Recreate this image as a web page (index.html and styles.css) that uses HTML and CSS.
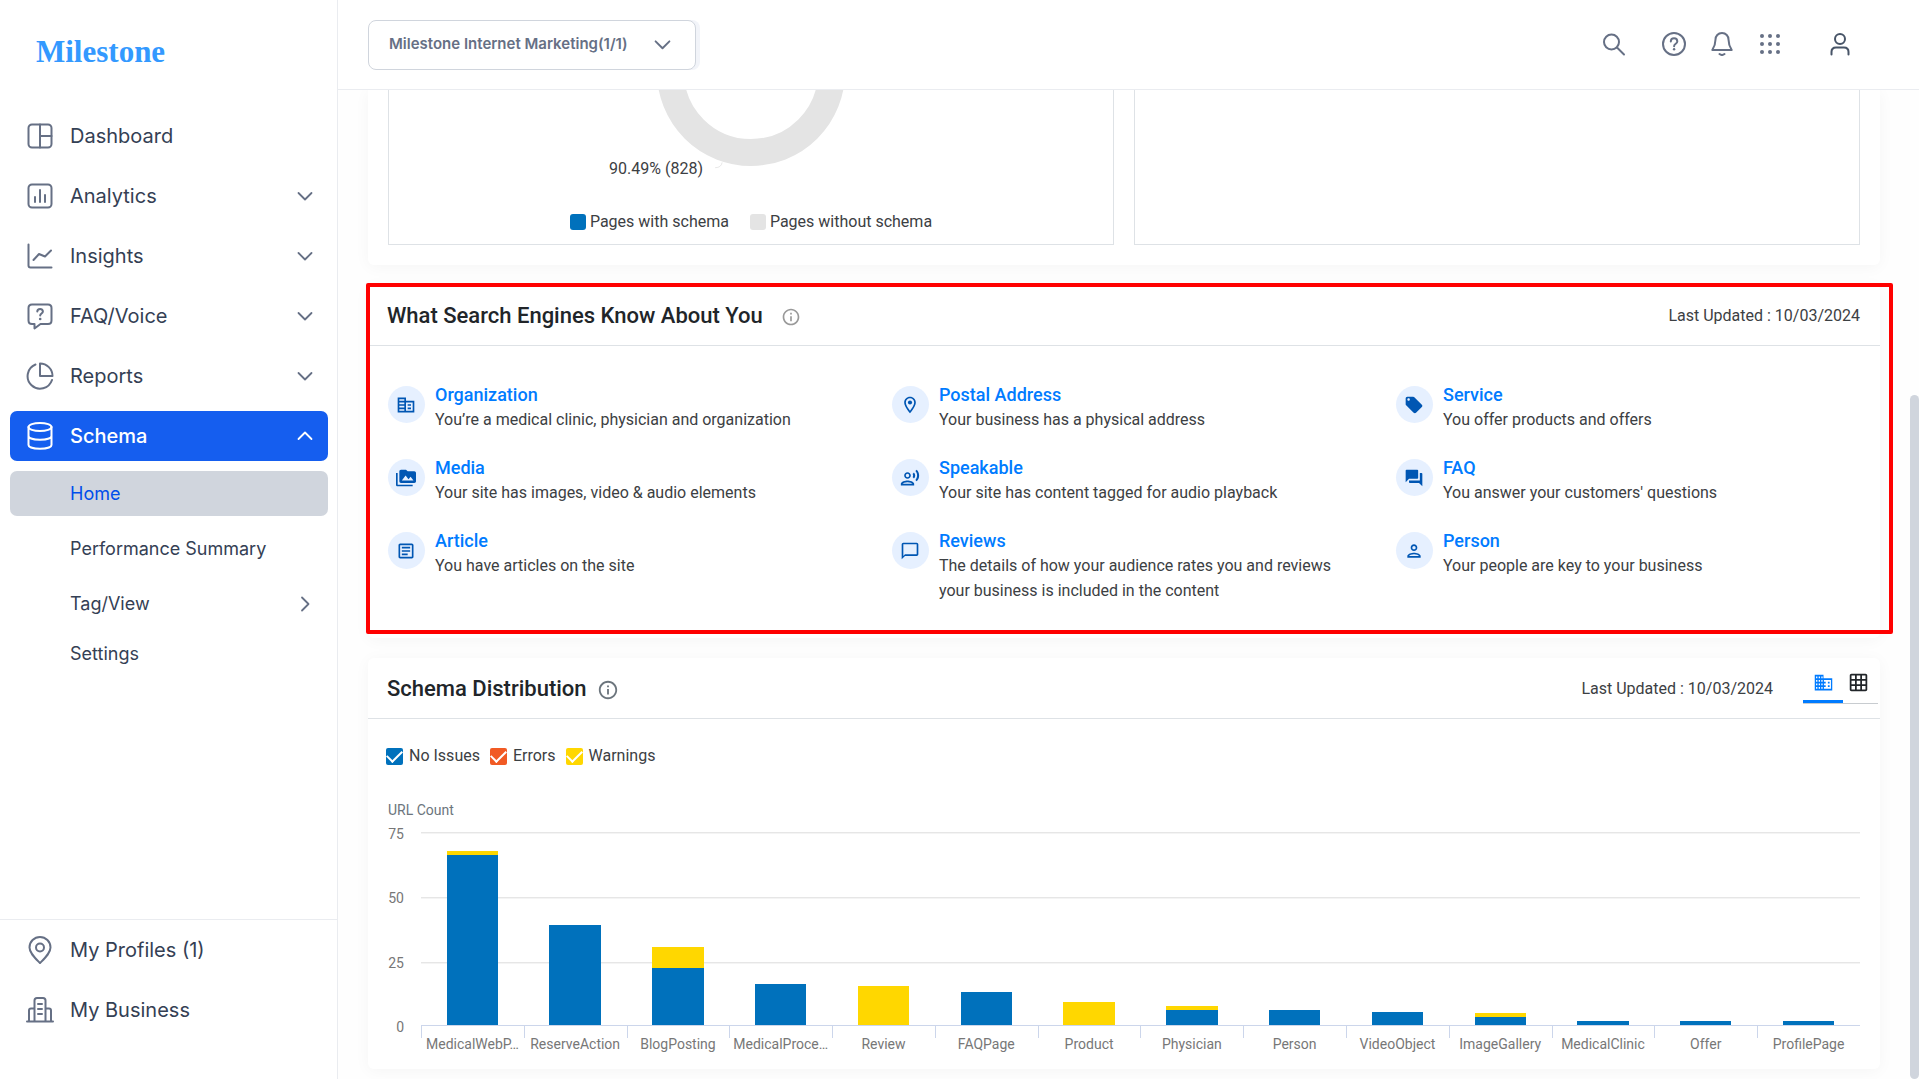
FILE: index.html
```html
<!DOCTYPE html>
<html lang="en">

<head>
  <meta charset="UTF-8">
  <meta name="viewport" content="width=device-width, initial-scale=1.0">
  <title>Milestone - Schema</title>
  <link rel="stylesheet" href="styles.css">
</head>

<body>

  <!-- shared icons -->
  <svg class="sprite" aria-hidden="true">
    <symbol id="chevron" viewBox="0 0 16 16">
      <path d="M1.5 5 8 11.5 14.5 5" fill="none" stroke="currentColor" stroke-width="1.8" stroke-linecap="round" stroke-linejoin="round" />
    </symbol>
    <symbol id="info" viewBox="0 0 24 24">
      <path d="M11 7h2v2h-2zm0 4h2v6h-2zm1-9C6.48 2 2 6.48 2 12s4.48 10 10 10 10-4.48 10-10S17.52 2 12 2zm0 18c-4.41 0-8-3.59-8-8s3.59-8 8-8 8 3.590 8 8-3.590 8-8 8z" />
    </symbol>
  </svg>

  <div class="app">
    <aside class="sidebar">
      <a class="logo" href="#">Milestone</a>

      <nav class="menu">
        <a class="menu-item" href="#">
          <svg class="menu-icon" viewBox="0 0 28 28"><rect x="2.500" y="2.500" width="23" height="23" rx="3.500" /><path d="M14 2.500v23M14 14h11.500" /></svg>
          <span>Dashboard</span>
        </a>
        <a class="menu-item" href="#">
          <svg class="menu-icon" viewBox="0 0 28 28"><rect x="2.500" y="2.500" width="23" height="23" rx="3.500" /><path d="M9 15v5M14 8v12M19 13v7" /></svg>
          <span>Analytics</span>
          <svg class="arrow"><use href="#chevron" /></svg>
        </a>
        <a class="menu-item" href="#">
          <svg class="menu-icon" viewBox="0 0 28 28"><path d="M2.500 2.500v21q0 2 2 2h21M7.500 18l5.500-6 6 2.500 6-6" /></svg>
          <span>Insights</span>
          <svg class="arrow"><use href="#chevron" /></svg>
        </a>
        <a class="menu-item" href="#">
          <svg class="menu-icon" viewBox="0 0 28 28"><path d="M6 2.500h16q3.500 0 3.500 3.500v12.500q0 3.500-3.500 3.500h-7.500L8.500 26.500v-4.500H6q-3.500 0-3.500-3.500V6q0-3.500 3.500-3.500z" /><path d="M11.300 9.500c0-3.500 5.600-3.500 5.600 0 0 2-2.700 2.100-2.700 4" /><circle class="fill" cx="14.200" cy="17" r="1.300" /></svg>
          <span>FAQ/Voice</span>
          <svg class="arrow"><use href="#chevron" /></svg>
        </a>
        <a class="menu-item" href="#">
          <svg class="menu-icon" viewBox="0 0 28 28"><path d="M14 1.500v12.500h12.500A12.500 12.500 0 0 0 14 1.500z" /><path d="M9.500 2.500A12.500 12.500 0 1 0 26 18" /></svg>
          <span>Reports</span>
          <svg class="arrow"><use href="#chevron" /></svg>
        </a>
        <a class="menu-item active" href="#">
          <svg class="menu-icon" viewBox="0 0 28 28"><ellipse cx="14" cy="5" rx="11.500" ry="4" /><path d="M2.500 5v18c0 5 23 5 23 0V5M2.500 14c0 5 23 5 23 0" /></svg>
          <span>Schema</span>
          <svg class="arrow up"><use href="#chevron" /></svg>
        </a>
        <div class="submenu">
          <a class="sub-item current" href="#">Home</a>
          <a class="sub-item" href="#">Performance Summary</a>
          <a class="sub-item parent" href="#">Tag/View <svg class="arrow right"><use href="#chevron" /></svg></a>
          <a class="sub-item" href="#">Settings</a>
        </div>
      </nav>

      <nav class="menu menu-bottom">
        <a class="menu-item" href="#">
          <svg class="menu-icon" viewBox="0 0 28 28"><path d="M14 27C9 22 3.500 17 3.500 11.500a10.500 10.500 0 0 1 21 0C24.500 17 19 22 14 27z" /><circle cx="14" cy="11.500" r="4" /></svg>
          <span>My Profiles (1)</span>
        </a>
        <a class="menu-item" href="#">
          <svg class="menu-icon" viewBox="0 0 28 28"><path d="M1 25.500h26M8.500 25V4.500q0-2.500 2.500-2.500h6q2.500 0 2.500 2.500V25M3 25V14.500q0-2 2-2h3.500M25 25V14.500q0-2-2-2h-3.500M12 8h4M12 13h4M12 18h4" /></svg>
          <span>My Business</span>
        </a>
      </nav>
    </aside>

    <div class="page">
      <header class="topbar">
        <div class="account">
          <select aria-label="Account">
            <option>Milestone Internet Marketing(1/1)</option>
          </select>
          <svg class="account-arrow"><use href="#chevron" /></svg>
        </div>
        <div class="tools">
          <button class="tool search" type="button" aria-label="Search"><svg viewBox="0 0 24 24"><circle cx="9.500" cy="10" r="7.500" /><path d="M15 15.500l7 7" /></svg></button>
          <button class="tool" type="button" aria-label="Help"><svg viewBox="0 0 24 24"><circle cx="12" cy="12" r="11" /><path d="M8.800 9.500c0-4.300 6.500-4.300 6.500 0 0 2.300-3.200 2.300-3.200 4.700" /><circle class="fill" cx="12.100" cy="17.300" r="1.200" /></svg></button>
          <button class="tool" type="button" aria-label="Notifications"><svg viewBox="0 0 24 24"><path d="M12 1c-4 0-6.500 3-6.500 6.500 0 5-1 7-3.200 10.500h19.400c-2.200-3.500-3.200-5.500-3.200-10.500C18.500 4 16 1 12 1z" /><path d="M9.500 22q2.500 2 5 0" /></svg></button>
          <button class="tool dots" type="button" aria-label="Apps"><svg viewBox="0 0 24 24"><circle cx="4" cy="4" r="2" /><circle cx="12" cy="4" r="2" /><circle cx="20" cy="4" r="2" /><circle cx="4" cy="12" r="2" /><circle cx="12" cy="12" r="2" /><circle cx="20" cy="12" r="2" /><circle cx="4" cy="20" r="2" /><circle cx="12" cy="20" r="2" /><circle cx="20" cy="20" r="2" /></svg></button>
          <button class="tool user" type="button" aria-label="Profile"><svg viewBox="0 0 24 24"><circle cx="12" cy="7" r="5" /><path d="M3.500 22.500V20q0-4.500 4.500-4.500h8q4.500 0 4.500 4.500v2.500" /></svg></button>
        </div>
      </header>

      <div class="scroll-area">
        <main class="content">

          <section class="card card-pages">
            <div class="panel">
              <div class="donut">
                <svg class="donut-ring" viewBox="-94 18 188 77"><circle cx="0" cy="0" r="80.500" /></svg>
                <div class="donut-label">90.49% (828)
                  <svg viewBox="0 0 10 8"><path d="M0 6.500q7 0 8-6" /></svg>
                </div>
              </div>
              <ul class="legend">
                <li><i class="swatch blue"></i>Pages with schema</li>
                <li><i class="swatch grey"></i>Pages without schema</li>
              </ul>
            </div>
            <div class="panel"></div>
          </section>

          <section class="card card-know">
            <div class="card-head">
              <h2>What Search Engines Know About You</h2>
              <svg class="info-icon light"><use href="#info" /></svg>
              <span class="updated">Last Updated : 10/03/2024</span>
            </div>
            <div class="know-grid">
              <div class="know">
                <span class="round"><svg viewBox="0 0 24 24"><path d="M12 7V3H2v18h20V7H12zm-2 12H4v-2h6v2zm0-4H4v-2h6v2zm0-4H4V9h6v2zm0-4H4V5h6v2zm10 12h-8V9h8v10zm-2-8h-4v2h4v-2zm0 4h-4v2h4v-2z" /></svg></span>
                <div><a href="#">Organization</a><p>You’re a medical clinic, physician and organization</p></div>
              </div>
              <div class="know">
                <span class="round"><svg viewBox="0 0 24 24"><path d="M12 2C8.130 2 5 5.130 5 9c0 5.250 7 13 7 13s7-7.750 7-13c0-3.870-3.130-7-7-7zM7 9c0-2.760 2.240-5 5-5s5 2.240 5 5c0 2.880-2.880 7.190-5 9.880C9.920 16.210 7 11.850 7 9z" /><circle cx="12" cy="9" r="2.500" /></svg></span>
                <div><a href="#">Postal Address</a><p>Your business has a physical address</p></div>
              </div>
              <div class="know">
                <span class="round"><svg viewBox="0 0 24 24"><path d="M21.410 11.580l-9-9C12.050 2.220 11.550 2 11 2H4c-1.100 0-2 .9-2 2v7c0 .55.220 1.050.59 1.420l9 9c.36.36.860.58 1.410.58.55 0 1.050-.22 1.410-.59l7-7c.37-.36.59-.86.59-1.410 0-.55-.23-1.060-.59-1.420zM5.500 7C4.670 7 4 6.330 4 5.500S4.670 4 5.500 4 7 4.670 7 5.500 6.330 7 5.500 7z" /></svg></span>
                <div><a href="#">Service</a><p>You offer products and offers</p></div>
              </div>
              <div class="know">
                <span class="round"><svg viewBox="0 0 24 24"><path d="M2 6H0v14c0 1.100.9 2 2 2h18v-2H2V6zm20-2h-8l-2-2H6c-1.100 0-2 .9-2 2v12c0 1.100.9 2 2 2h16c1.100 0 2-.9 2-2V6c0-1.100-.9-2-2-2zM7 15l4.500-6 3.500 4.510 2.500-3.010L21 15H7z" /></svg></span>
                <div><a href="#">Media</a><p>Your site has images, video &amp; audio elements</p></div>
              </div>
              <div class="know">
                <span class="round"><svg viewBox="0 0 24 24"><path d="M9 13c2.210 0 4-1.790 4-4s-1.790-4-4-4-4 1.790-4 4 1.790 4 4 4zm0-6c1.100 0 2 .9 2 2s-.9 2-2 2-2-.9-2-2 .9-2 2-2zm0 8c-2.670 0-8 1.340-8 4v2h16v-2c0-2.660-5.330-4-8-4zm-6 4c.22-.72 3.310-2 6-2 2.700 0 5.800 1.290 6 2H3zM15.080 7.050c.84 1.180.84 2.710 0 3.890l1.680 1.690c2.020-2.020 2.020-5.070 0-7.270l-1.680 1.690zM20.070 2l-1.630 1.630c2.770 3.020 2.770 7.560 0 10.740L20.070 16c3.900-3.890 3.910-9.950 0-14z" /></svg></span>
                <div><a href="#">Speakable</a><p>Your site has content tagged for audio playback</p></div>
              </div>
              <div class="know">
                <span class="round"><svg viewBox="0 0 24 24"><path d="M21 6h-2v9H6v2c0 .55.45 1 1 1h11l4 4V7c0-.55-.45-1-1-1zm-4 6V3c0-.55-.45-1-1-1H3c-.55 0-1 .45-1 1v14l4-4h10c.55 0 1-.45 1-1z" /></svg></span>
                <div><a href="#">FAQ</a><p>You answer your customers' questions</p></div>
              </div>
              <div class="know">
                <span class="round"><svg viewBox="0 0 24 24"><path d="M19 5v14H5V5h14m0-2H5c-1.100 0-2 .9-2 2v14c0 1.100.9 2 2 2h14c1.100 0 2-.9 2-2V5c0-1.100-.9-2-2-2zm-5 14H7v-2h7v2zm3-4H7v-2h10v2zm0-4H7V7h10v2z" /></svg></span>
                <div><a href="#">Article</a><p>You have articles on the site</p></div>
              </div>
              <div class="know">
                <span class="round"><svg viewBox="0 0 24 24"><path d="M20 2H4c-1.100 0-2 .9-2 2v18l4-4h14c1.100 0 2-.9 2-2V4c0-1.100-.9-2-2-2zm0 14H6l-2 2V4h16v12z" /></svg></span>
                <div><a href="#">Reviews</a><p>The details of how your audience rates you and reviews your business is included in the content</p></div>
              </div>
              <div class="know">
                <span class="round"><svg viewBox="0 0 24 24"><path d="M12 6c1.100 0 2 .9 2 2s-.9 2-2 2-2-.9-2-2 .9-2 2-2m0 10c2.700 0 5.800 1.290 6 2H6c.23-.72 3.310-2 6-2m0-12C9.790 4 8 5.790 8 8s1.790 4 4 4 4-1.790 4-4-1.790-4-4-4zm0 10c-2.670 0-8 1.340-8 4v2h16v-2c0-2.660-5.330-4-8-4z" /></svg></span>
                <div><a href="#">Person</a><p>Your people are key to your business</p></div>
              </div>
            </div>
            <div class="highlight"></div>
          </section>

          <section class="card card-chart">
            <div class="card-head">
              <h2>Schema Distribution</h2>
              <svg class="info-icon"><use href="#info" /></svg>
              <span class="updated">Last Updated : 10/03/2024</span>
              <div class="views">
                <button class="view on" type="button" aria-label="Chart view"><svg viewBox="0 0 24 24"><path d="M12 7V3H2v18h20V7H12zM5 19H3.500v-2H5v2zm0-4H3.500v-2H5v2zm0-4H3.500V9H5v2zm0-4H3.500V5H5v2zm3 12H6.500v-2H8v2zm0-4H6.500v-2H8v2zm0-4H6.500V9H8v2zm0-4H6.500V5H8v2zm3 12H9.500v-2H11v2zm0-4H9.500v-2H11v2zm0-4H9.500V9H11v2zm0-4H9.500V5H11v2zm9.500 12H12.500v-2h2v-2h-2v-2h2v-2h-2V9h8v10zm-1.500-8h-2v2h2v-2zm0 4h-2v2h2v-2z" /></svg></button>
                <button class="view" type="button" aria-label="Table view"><svg viewBox="0 0 24 24"><path d="M20 2H4c-1.100 0-2 .9-2 2v16c0 1.100.9 2 2 2h16c1.100 0 2-.9 2-2V4c0-1.100-.9-2-2-2zM8 20H4v-4h4v4zm0-6H4v-4h4v4zm0-6H4V4h4v4zm6 12h-4v-4h4v4zm0-6h-4v-4h4v4zm0-6h-4V4h4v4zm6 12h-4v-4h4v4zm0-6h-4v-4h4v4zm0-6h-4V4h4v4z" /></svg></button>
              </div>
            </div>

            <div class="filters">
              <label><input class="check blue" type="checkbox" checked>No Issues</label>
              <label><input class="check orange" type="checkbox" checked>Errors</label>
              <label><input class="check yellow" type="checkbox" checked>Warnings</label>
            </div>

            <div class="axis-title">URL Count</div>
            <div class="chart">
              <div class="y-axis"><span>75</span><span>50</span><span>25</span><span>0</span></div>
              <div class="plot">
                <div class="col"><div class="track"><i class="warn"></i><i class="ok" style="height: 88%"></i></div><span>MedicalWebP…</span></div>
                <div class="col"><div class="track"><i class="ok" style="height: 52%"></i></div><span>ReserveAction</span></div>
                <div class="col"><div class="track"><i class="warn" style="height: 11%"></i><i class="ok" style="height: 29.330%"></i></div><span>BlogPosting</span></div>
                <div class="col"><div class="track"><i class="ok" style="height: 21.330%"></i></div><span>MedicalProce…</span></div>
                <div class="col"><div class="track"><i class="warn" style="height: 20%"></i></div><span>Review</span></div>
                <div class="col"><div class="track"><i class="ok" style="height: 17.330%"></i></div><span>FAQPage</span></div>
                <div class="col"><div class="track"><i class="warn" style="height: 12%"></i></div><span>Product</span></div>
                <div class="col"><div class="track"><i class="warn"></i><i class="ok" style="height: 8%"></i></div><span>Physician</span></div>
                <div class="col"><div class="track"><i class="ok" style="height: 8%"></i></div><span>Person</span></div>
                <div class="col"><div class="track"><i class="ok" style="height: 6.670%"></i></div><span>VideoObject</span></div>
                <div class="col"><div class="track"><i class="warn"></i><i class="ok" style="height: 4%"></i></div><span>ImageGallery</span></div>
                <div class="col"><div class="track"><i class="ok"></i></div><span>MedicalClinic</span></div>
                <div class="col"><div class="track"><i class="ok"></i></div><span>Offer</span></div>
                <div class="col"><div class="track"><i class="ok"></i></div><span>ProfilePage</span></div>
              </div>
            </div>
          </section>

        </main>
        <div class="scrollbar"><div class="thumb"></div></div>
      </div>
    </div>
  </div>

</body>

</html>
```
FILE: styles.css
```css
* {
  box-sizing: border-box;
  padding: 0;
  margin: 0;
}

html,
body {
  height: 100%;
}

body {
  font-family: Roboto, "Liberation Sans", sans-serif;
  font-size: 16px;
  color: #3c4043;
  background-color: #fff;
  overflow: hidden;
}

a {
  color: inherit;
  text-decoration: none;
}

button {
  border: none;
  background: none;
  cursor: pointer;
}

.sprite {
  display: none;
}

.app {
  display: flex;
  height: 100vh;
}

/* sidebar */
.sidebar {
  flex: none;
  width: 338px;
  display: flex;
  flex-direction: column;
  border-right: 1px solid #eaecf0;
  font-family: Inter, "Liberation Sans", sans-serif;
  color: #344054;
}

.logo {
  height: 111px;
  padding: 30px 0 0 36px;
  font-family: "Liberation Serif", serif;
  font-size: 31px;
  font-weight: 700;
  line-height: 44px;
  color: #3399ff;
}

.menu {
  display: flex;
  flex-direction: column;
  gap: 10px;
  padding: 0 9px 0 10px;
}

.menu-item {
  height: 50px;
  display: flex;
  align-items: center;
  gap: 16px;
  padding: 0 15px 0 16px;
  border-radius: 7px;
  font-size: 20px;
}

.menu-icon {
  flex: none;
  width: 28px;
  height: 28px;
  fill: none;
  stroke: #667085;
  stroke-width: 2;
  stroke-linecap: round;
  stroke-linejoin: round;
}

.menu-icon .fill {
  fill: #667085;
  stroke: none;
}

.arrow {
  width: 16px;
  height: 16px;
  margin-left: auto;
  color: #667085;
}

.arrow.up {
  transform: rotate(180deg);
}

.arrow.right {
  transform: rotate(-90deg);
}

.menu-item.active {
  background-color: #155eef;
  color: #fff;
  font-weight: 500;
}

.menu-item.active .menu-icon {
  stroke: #fff;
}

.menu-item.active .arrow {
  color: #fff;
}

.submenu {
  display: flex;
  flex-direction: column;
  gap: 10px;
}

.sub-item {
  height: 45px;
  display: flex;
  align-items: center;
  padding: 0 15px 0 60px;
  border-radius: 7px;
  font-size: 18px;
}

.sub-item.parent {
  margin-bottom: -5px;
}

.sub-item.current {
  background-color: #d0d5dd;
  color: #004eeb;
}

.menu-bottom {
  margin-top: auto;
  padding-top: 5px;
  padding-bottom: 44px;
  border-top: 1px solid #eaecf0;
}

/* top bar */
.page {
  flex: 1;
  min-width: 0;
  display: flex;
  flex-direction: column;
}

.topbar {
  flex: none;
  height: 90px;
  display: flex;
  align-items: center;
  justify-content: space-between;
  padding: 0 67px 0 30px;
  border-bottom: 1px solid #eaecf0;
}

.account {
  position: relative;
}

.account select {
  appearance: none;
  width: 328px;
  height: 50px;
  padding: 0 50px 2px 20px;
  border: 1px solid #d0d5dd;
  border-radius: 8px;
  background-color: #fff;
  box-shadow: 4px 0 0 #f2f4f9;
  font: 600 15px Inter, "Liberation Sans", sans-serif;
  color: #667085;
}

.account-arrow {
  position: absolute;
  top: 16px;
  right: 25px;
  width: 17px;
  height: 17px;
  color: #667085;
  pointer-events: none;
}

.tools {
  display: flex;
  align-items: center;
  gap: 24px;
  padding-bottom: 2px;
}

.tool {
  width: 24px;
  height: 24px;
}

.tool svg {
  display: block;
  width: 24px;
  height: 24px;
  fill: none;
  stroke: #667085;
  stroke-width: 2;
  stroke-linecap: round;
  stroke-linejoin: round;
}

.tool.dots svg {
  fill: #667085;
  stroke: none;
}

.tool .fill {
  fill: #667085;
  stroke: none;
}

.tool.search {
  margin-right: 12px;
}

.tool.user {
  margin-left: 22px;
}

.tool.user svg {
  stroke: #475467;
}

/* content */
.scroll-area {
  flex: 1;
  min-height: 0;
  display: flex;
  background-color: #fefefe;
}

.content {
  flex: 1;
  min-width: 0;
  padding: 0 30px;
  overflow: hidden;
  display: flex;
  flex-direction: column;
  gap: 20px;
}

.scrollbar {
  width: 9px;
  padding-top: 305px;
}

.thumb {
  height: 100%;
  border-radius: 5px;
  background-color: #d0d5dd;
}

.card {
  flex: none;
  border-radius: 6px;
  background-color: #fff;
  box-shadow: 0 2px 16px rgba(0, 0, 0, 0.04);
}

.card-pages {
  display: grid;
  grid-template-columns: 1fr 1fr;
  gap: 20px;
  padding: 0 20px 20px;
  border-radius: 0 0 6px 6px;
}

.panel {
  min-height: 155px;
  border: 1px solid #dee2e6;
  border-top: none;
}

.donut {
  position: relative;
  display: flex;
  justify-content: center;
}

.donut-ring {
  width: 188px;
  height: 77px;
  fill: none;
  stroke: #e4e4e4;
  stroke-width: 27;
}

.donut-label {
  position: absolute;
  top: 69px;
  right: calc(50% + 27px);
  display: flex;
  align-items: center;
  gap: 12px;
}

.donut-label svg {
  width: 9px;
  height: 7px;
  margin-bottom: 6px;
  fill: none;
  stroke: #e4e4e4;
}

.legend {
  display: flex;
  justify-content: center;
  gap: 21px;
  margin-top: 44px;
  list-style: none;
}

.legend li {
  display: flex;
  align-items: center;
  gap: 4px;
  line-height: 22px;
}

.swatch {
  width: 16px;
  height: 16px;
  border-radius: 3px;
}

.swatch.blue {
  background-color: #0071bc;
}

.swatch.grey {
  background-color: #e4e4e4;
}

.card-head {
  height: 61px;
  display: flex;
  align-items: center;
  padding: 0 20px 0 19px;
  border-bottom: 1px solid #dee2e6;
}

.card-head h2 {
  font-size: 22px;
  font-weight: 500;
  color: #212529;
}

.info-icon {
  width: 22px;
  height: 22px;
  margin: 4px 0 0 10px;
  fill: #6c757d;
}

.info-icon.light {
  width: 20px;
  height: 20px;
  margin: 3px 0 0 18px;
  fill: #999;
}

.updated {
  margin-left: auto;
}

.card-know {
  position: relative;
}

.know-grid {
  display: grid;
  grid-template-columns: repeat(3, 1fr);
  row-gap: 23px;
  padding: 36px 0 35px;
}

.know {
  display: flex;
  align-items: flex-start;
  gap: 10px;
  padding: 0 27px 0 20px;
}

.know a {
  display: block;
  font-size: 18px;
  font-weight: 500;
  line-height: 25px;
  color: #007bff;
}

.know p {
  line-height: 25px;
}

.round {
  flex: none;
  width: 37px;
  height: 37px;
  margin-top: 4px;
  padding-right: 1px;
  border-radius: 50%;
  display: flex;
  align-items: center;
  justify-content: center;
  background-color: #e6f0ff;
}

.round svg {
  width: 20px;
  height: 20px;
  fill: #0056b3;
}

/* red frame around the card */
.highlight {
  position: absolute;
  top: -2px;
  bottom: 4px;
  left: -2px;
  right: -13px;
  border: 4px solid #ff0000;
  border-radius: 2px;
  pointer-events: none;
}

.views {
  display: flex;
  margin: 0 -18px 0 30px;
  border-bottom: 1px solid #c8ccd0;
  align-self: flex-start;
  padding-top: 10px;
}

.view {
  width: 35px;
  height: 35px;
  display: flex;
  justify-content: center;
  padding: 4px 4px 0 0;
}

.view svg {
  width: 21px;
  height: 21px;
  fill: #212529;
}

.view.on {
  width: 40px;
  padding-right: 0;
  border-bottom: 3px solid #007bff;
}

.view.on svg {
  fill: #007bff;
}

.filters {
  display: flex;
  gap: 10px;
  padding: 26px 18px 0;
}

.filters label {
  display: flex;
  align-items: center;
  gap: 6px;
  line-height: 22px;
}

.check {
  appearance: none;
  width: 17px;
  height: 17px;
  border-radius: 2px;
  display: flex;
  align-items: center;
  justify-content: center;
}

.check::before {
  content: '';
  width: 13px;
  height: 7px;
  margin-bottom: 4px;
  border-left: 2px solid #fff;
  border-bottom: 2px solid #fff;
  transform: rotate(-45deg);
}

.check.blue {
  background-color: #0071bc;
}

.check.orange {
  background-color: #f15a24;
}

.check.yellow {
  background-color: #ffd700;
}

/* chart */
.axis-title {
  padding: 33px 20px 0;
  font-size: 14px;
  line-height: 20px;
  color: #6c757d;
}

.chart {
  display: flex;
  gap: 17px;
  padding: 12px 20px 16px;
}

.y-axis {
  width: 16px;
  height: 209px;
  margin-top: -6px;
  display: flex;
  flex-direction: column;
  justify-content: space-between;
  font-size: 14px;
  line-height: 16px;
  text-align: right;
  color: #777;
}

.plot {
  flex: 1;
  display: flex;
  background: repeating-linear-gradient(#e6e6e6 0 1px, #f4f4f4 1px 2px, transparent 2px 65px) 0 0 / 100% 190px no-repeat;
}

.col {
  flex: 1 1 0;
  min-width: 0;
  font-size: 14px;
  text-align: center;
  color: #777;
}

.track {
  height: 194px;
  display: flex;
  flex-direction: column;
  justify-content: flex-end;
  align-items: center;
  border-bottom: 1px solid #ccd6eb;
}

.track i {
  width: 50%;
  min-height: 4px;
}

.ok {
  background-color: #0071bc;
}

.warn {
  background-color: #ffd700;
}

.col span {
  display: block;
  padding-top: 9px;
  line-height: 18px;
  background: linear-gradient(#ccd6eb, #ccd6eb) 0 0 / 1px 12px no-repeat;
}
```
